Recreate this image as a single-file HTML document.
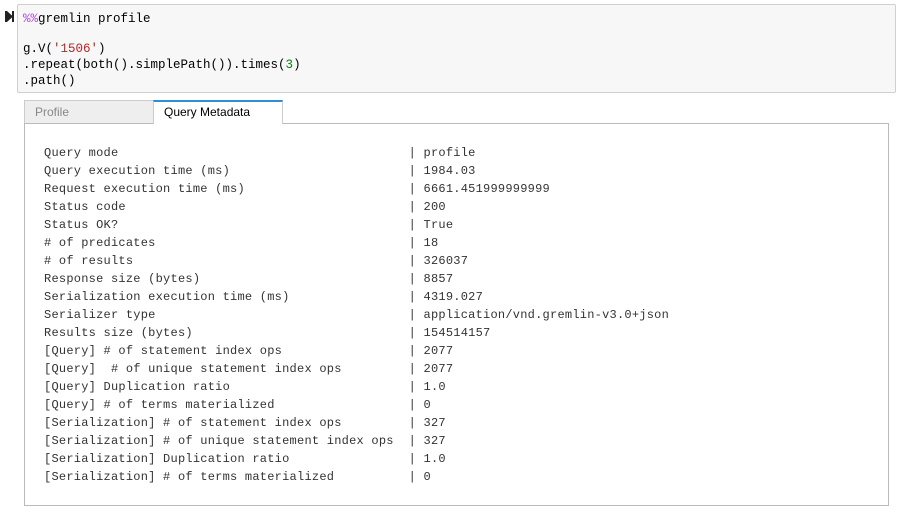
<!DOCTYPE html>
<html><head><style>
body{margin:0;background:#fff;width:902px;height:516px;overflow:hidden;font-family:"Liberation Sans",sans-serif;position:relative}
.run{position:absolute;left:5px;top:11px;width:9px;height:11px}
.cell{position:absolute;left:17px;top:4px;width:877px;height:87px;background:#f7f7f7;border:1px solid #cfcfcf;border-radius:2px}
pre{margin:0;font-family:"Liberation Mono",monospace;font-size:12.5px;line-height:16px;color:#000}
.code{position:absolute;left:5px;top:6px}
.tabs{position:absolute;left:24px;top:100px;width:864px;height:23px}
.t1{position:absolute;left:0;top:0;background:#eee;border:1px solid #ccc;border-bottom:none;color:#888;font-size:12px;line-height:22px;padding-left:10px;box-sizing:border-box;width:130px;height:23px}
.t2{position:absolute;left:129px;top:0;width:130px;height:24px;background:#fff;border:1px solid #ccc;border-top:2px solid #2e8fd6;border-bottom:none;font-size:12px;line-height:21px;padding-left:10px;box-sizing:border-box;color:#000;z-index:2}
.panel{position:absolute;left:24px;top:123px;width:863px;height:381px;border:1px solid #bbb;background:#fff}
.out{position:absolute;left:19px;top:20px;color:#333;line-height:18px;font-size:12px;letter-spacing:0.24px}
</style></head><body>
<svg class="run" viewBox="0 0 9 11"><rect x="0" y="0" width="2" height="11" fill="#222"/><path d="M2 0 L8 5.5 L2 11Z" fill="#222"/><rect x="7" y="0" width="2" height="11" fill="#222"/></svg>
<div class="cell"><pre class="code"><span style="color:#a94fd6">%%</span>gremlin profile</pre>
<pre class="code" style="top:36px">g.V(<span style="color:#b22">'1506'</span>)
.repeat(both().simplePath()).times(<span style="color:#080">3</span>)
.path()</pre></div>
<div class="tabs"><div class="t1">Profile</div><div class="t2">Query Metadata</div></div>
<div class="panel"><pre class="out">Query mode                                       | profile
Query execution time (ms)                        | 1984.03
Request execution time (ms)                      | 6661.451999999999
Status code                                      | 200
Status OK?                                       | True
# of predicates                                  | 18
# of results                                     | 326037
Response size (bytes)                            | 8857
Serialization execution time (ms)                | 4319.027
Serializer type                                  | application/vnd.gremlin-v3.0+json
Results size (bytes)                             | 154514157
[Query] # of statement index ops                 | 2077
[Query]  # of unique statement index ops         | 2077
[Query] Duplication ratio                        | 1.0
[Query] # of terms materialized                  | 0
[Serialization] # of statement index ops         | 327
[Serialization] # of unique statement index ops  | 327
[Serialization] Duplication ratio                | 1.0
[Serialization] # of terms materialized          | 0</pre></div>
</body></html>
